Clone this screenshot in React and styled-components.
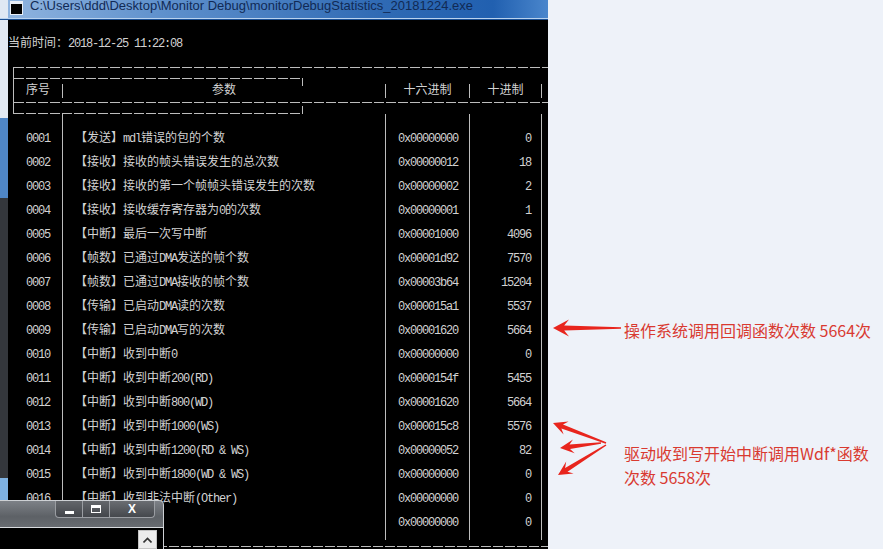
import React from 'react'
import styled, { createGlobalStyle } from 'styled-components'

const GlobalStyle = createGlobalStyle`
  html, body {
    margin: 0;
    padding: 0;
    background: #eef2f9;
  }
  body {
    width: 883px;
    height: 549px;
    overflow: hidden;
  }
`

const rows = [
  ['0001', '【发送】mdl错误的包的个数', '0x00000000', '0'],
  ['0002', '【接收】接收的帧头错误发生的总次数', '0x00000012', '18'],
  ['0003', '【接收】接收的第一个帧帧头错误发生的次数', '0x00000002', '2'],
  ['0004', '【接收】接收缓存寄存器为0的次数', '0x00000001', '1'],
  ['0005', '【中断】最后一次写中断', '0x00001000', '4096'],
  ['0006', '【帧数】已通过DMA发送的帧个数', '0x00001d92', '7570'],
  ['0007', '【帧数】已通过DMA接收的帧个数', '0x00003b64', '15204'],
  ['0008', '【传输】已启动DMA读的次数', '0x000015a1', '5537'],
  ['0009', '【传输】已启动DMA写的次数', '0x00001620', '5664'],
  ['0010', '【中断】收到中断0', '0x00000000', '0'],
  ['0011', '【中断】收到中断200(RD)', '0x0000154f', '5455'],
  ['0012', '【中断】收到中断800(WD)', '0x00001620', '5664'],
  ['0013', '【中断】收到中断1000(WS)', '0x000015c8', '5576'],
  ['0014', '【中断】收到中断1200(RD & WS)', '0x00000052', '82'],
  ['0015', '【中断】收到中断1800(WD & WS)', '0x00000000', '0'],
  ['0016', '【中断】收到非法中断(Other)', '0x00000000', '0'],
  ['0017', '【中断】', '0x00000000', '0'],
]

const Page = styled.div`
  position: relative;
  width: 883px;
  height: 549px;
  display: flex;
  background: #eef2f9;
  overflow: hidden;
`

const Window = styled.div`
  width: 548px;
  height: 549px;
  display: flex;
  flex-direction: column;
  flex-shrink: 0;
`

const TitleBar = styled.div`
  height: 18px;
  display: flex;
  align-items: flex-start;
  overflow: hidden;
  background: linear-gradient(to right, #dfe8f3 0, #dfe8f3 8px, #8fb4df 8px, #5e90cc 30%, #2f6ab4 70%, #2160b0 90%, #4a86cc 100%);
  border-bottom: 1px solid #b9d2ee;
  box-shadow: 0 1px 0 #1a4f93;
`

const AppIcon = styled.div`
  width: 11px;
  height: 10px;
  margin: 1px 7px 0 10px;
  flex-shrink: 0;
  background: #000;
  border: 1px solid #e8eef6;
  border-top-width: 3px;
`

const TitleText = styled.div`
  margin-top: -3px;
  font-family: "Liberation Sans", "Noto Sans", sans-serif;
  font-size: 13px;
  line-height: 18px;
  color: #112a55;
  white-space: nowrap;
`

const Main = styled.div`
  flex: 1;
  display: flex;
  min-height: 0;
  margin-top: 1px;
`

const LeftFrame = styled.div`
  width: 8px;
  flex-shrink: 0;
  background: linear-gradient(to bottom, #e2e9f3 0, #e2e9f3 98px, #4f86c6 98px, #4f86c6 178px, #34373c 178px, #34373c 458px, #7fb2e2 458px);
`

const Console = styled.div`
  flex: 1;
  display: flex;
  flex-direction: column;
  overflow: hidden;
  background: #000;
  color: #d2d2d2;
  font-family: "Liberation Mono", "Noto Sans CJK SC", monospace;
  font-size: 12px;
`

const Ascii = styled.span`
  letter-spacing: -1.2px;
`

const TimeLine = styled.div`
  margin-top: 16px;
  height: 16px;
  line-height: 16px;
  white-space: pre;
`

const Table = styled.div`
  margin-left: 5px;
  margin-top: 15px;
  display: flex;
  flex-direction: column;
`

const HeaderBlock = styled.div`
  border-left: 1px solid #bdbdbd;
  display: flex;
  flex-direction: column;
`

const Rule = styled.div`
  position: relative;
  height: 1px;
  width: ${p => p.$w ? `${p.$w}px` : '100%'};
  margin-top: ${p => p.$mt || 0}px;
  background: repeating-linear-gradient(to right, #bdbdbd 0, #bdbdbd 10px, transparent 10px, transparent 12px);
  &::after {
    content: '';
    display: ${p => p.$tick ? 'block' : 'none'};
    position: absolute;
    right: 0;
    width: 1px;
    height: 8px;
    background: #bdbdbd;
    ${p => p.$tick === 'down' ? 'top: 0;' : 'bottom: 0;'}
  }
`

const HeaderRow = styled.div`
  margin-top: 5px;
  height: 14px;
  display: grid;
  grid-template-columns: 48px 323px 84px 73px;
`

const HeaderCell = styled.div`
  line-height: 14px;
  text-align: center;
  border-left: ${p => p.$left ? '1px solid #bdbdbd' : 'none'};
  border-right: ${p => p.$right ? '1px solid #bdbdbd' : 'none'};
`

const BodyCols = styled.div`
  display: flex;
`

const Column = styled.div`
  box-sizing: border-box;
  width: ${p => p.$w}px;
  padding: 13px ${p => p.$pr || 0}px 5px ${p => p.$pl || 0}px;
  text-align: ${p => p.$align || 'left'};
  border-left: ${p => p.$left ? '1px solid #bdbdbd' : 'none'};
  border-right: ${p => p.$right ? '1px solid #bdbdbd' : 'none'};
  white-space: pre;
`

const Cell = styled.div`
  height: 24px;
  line-height: 24px;
`

const BottomRule = styled(Rule)`
  margin-top: 6px;
`

const Popup = styled.div`
  position: absolute;
  left: 0;
  top: 500px;
  width: 164px;
  height: 49px;
  display: flex;
  flex-direction: column;
`

const PopupBar = styled.div`
  box-sizing: border-box;
  height: 27px;
  display: flex;
  justify-content: flex-end;
  align-items: flex-start;
  padding-right: 8px;
  background: linear-gradient(to bottom, #7d8187, #5d6166 60%, #686c71);
  border-top: 1px solid #cdd0d4;
  border-right: 1px solid #cdd0d4;
  border-top-right-radius: 5px;
`

const CapButton = styled.div`
  box-sizing: border-box;
  width: ${p => p.$w}px;
  height: 17px;
  display: flex;
  align-items: center;
  justify-content: center;
  background: ${p => p.$close ? 'linear-gradient(#6a6d72, #45484d)' : 'linear-gradient(#63666b, #43464b)'};
  border: 1px solid #9a9da2;
  border-top: none;
  margin-left: -1px;
  color: #fff;
  font-family: "Liberation Sans", sans-serif;
  font-weight: bold;
  font-size: 12px;
  ${p => p.$first ? 'border-bottom-left-radius: 4px;' : ''}
  ${p => p.$close ? 'border-bottom-right-radius: 4px;' : ''}
`

const MinGlyph = styled.div`
  width: 9px;
  height: 3px;
  margin-top: 6px;
  background: #fff;
`

const MaxGlyph = styled.div`
  box-sizing: border-box;
  width: 10px;
  height: 8px;
  border: 1px solid #fff;
  border-top-width: 3px;
`

const PopupBody = styled.div`
  flex: 1;
  display: flex;
  justify-content: flex-end;
  align-items: flex-end;
  padding-right: 6px;
  background: #000;
  border-top: 1px solid #d9dcdf;
  border-right: 1px solid #cdd0d4;
`

const ScrollUp = styled.div`
  box-sizing: border-box;
  width: 19px;
  height: 19px;
  display: flex;
  align-items: center;
  justify-content: center;
  background: #ececec;
  border: 1px solid #c4c4c4;
`

const Notes = styled.div`
  flex: 1;
  display: flex;
  flex-direction: column;
  padding-left: 4px;
`

const Note = styled.div`
  display: flex;
  align-items: flex-start;
  margin-top: ${p => p.$top}px;
`

const NoteText = styled.div`
  margin-left: ${p => p.$ml || 0}px;
  margin-top: ${p => p.$mt || 0}px;
  font-family: "Noto Sans CJK SC", "Noto Sans", sans-serif;
  font-size: 16px;
  line-height: 24px;
  color: #d93a31;
  white-space: nowrap;
`

const Mixed = ({ text }) => (
  <>
    {text.match(/[\x00-\x7f]+|[^\x00-\x7f]+/g).map((run, i) =>
      /^[\x00-\x7f]+$/.test(run) ? <Ascii key={i}>{run}</Ascii> : <span key={i}>{run}</span>
    )}
  </>
)

const arrowPoints = (tx, ty, sx, sy, hl = 14, hw = 7, sw = 4.5, tw = 1.5) => {
  const len = Math.hypot(tx - sx, ty - sy)
  const dx = (tx - sx) / len
  const dy = (ty - sy) / len
  const nx = -dy
  const ny = dx
  const bx = tx - dx * hl
  const by = ty - dy * hl
  const cx = tx - dx * hl * 0.7
  const cy = ty - dy * hl * 0.7
  return [
    [tx, ty],
    [bx + nx * hw, by + ny * hw],
    [cx + nx * sw / 2, cy + ny * sw / 2],
    [sx + nx * tw / 2, sy + ny * tw / 2],
    [sx - nx * tw / 2, sy - ny * tw / 2],
    [cx - nx * sw / 2, cy - ny * sw / 2],
    [bx - nx * hw, by - ny * hw],
  ].map(p => p.map(v => v.toFixed(1)).join(',')).join(' ')
}

const Arrow = ({ tip, tail, hl, hw, sw }) => (
  <polygon points={arrowPoints(tip[0], tip[1], tail[0], tail[1], hl, hw, sw)} fill="#e8251d" />
)

const App = () => {
  return (
    <Page>
      <GlobalStyle />
      <Window>
        <TitleBar>
          <AppIcon />
          <TitleText>{'C:\\Users\\ddd\\Desktop\\Monitor Debug\\monitorDebugStatistics_20181224.exe'}</TitleText>
        </TitleBar>
        <Main>
          <LeftFrame />
          <Console>
            <TimeLine><Mixed text="当前时间：2018-12-25 11:22:08" /></TimeLine>
            <Table>
              <HeaderBlock>
                <Rule />
                <Rule $w={289} $mt={10} $tick="down" />
                <HeaderRow>
                  <HeaderCell>序号</HeaderCell>
                  <HeaderCell $left>参数</HeaderCell>
                  <HeaderCell $left>十六进制</HeaderCell>
                  <HeaderCell $left $right>十进制</HeaderCell>
                </HeaderRow>
                <Rule $mt={4} />
                <Rule $w={289} $mt={10} $tick="up" />
              </HeaderBlock>
              <BodyCols>
                <Column $w={49} $pl={13}>
                  {rows.map(r => <Cell key={r[0]}><Ascii>{r[0]}</Ascii></Cell>)}
                </Column>
                <Column $w={323} $pl={12} $left>
                  {rows.map(r => <Cell key={r[0]}><Mixed text={r[1]} /></Cell>)}
                </Column>
                <Column $w={84} $pl={12} $left>
                  {rows.map(r => <Cell key={r[0]}><Ascii>{r[2]}</Ascii></Cell>)}
                </Column>
                <Column $w={73} $pr={10} $align="right" $left $right>
                  {rows.map(r => <Cell key={r[0]}><Ascii>{r[3]}</Ascii></Cell>)}
                </Column>
              </BodyCols>
              <BottomRule />
            </Table>
          </Console>
        </Main>
      </Window>

      <Popup>
        <PopupBar>
          <CapButton $w={28} $first><MinGlyph /></CapButton>
          <CapButton $w={28}><MaxGlyph /></CapButton>
          <CapButton $w={46} $close>X</CapButton>
        </PopupBar>
        <PopupBody>
          <ScrollUp>
            <svg width="9" height="6" viewBox="0 0 9 6">
              <path d="M0.5 5.5 L4.5 1.5 L8.5 5.5" fill="none" stroke="#333" strokeWidth="1.6" />
            </svg>
          </ScrollUp>
        </PopupBody>
      </Popup>

      <Notes>
        <Note $top={318}>
          <svg width="70" height="24" viewBox="0 0 70 24">
            <Arrow tip={[1, 10]} tail={[69, 10]} hl={16} hw={8.5} sw={5} />
          </svg>
          <NoteText $ml={2}>操作系统调用回调函数次数 5664次</NoteText>
        </Note>
        <Note $top={74}>
          <svg width="62" height="68" viewBox="0 0 62 68">
            <Arrow tip={[1, 7]} tail={[54, 27]} />
            <Arrow tip={[8, 32]} tail={[49, 27]} />
            <Arrow tip={[6, 59]} tail={[54, 29]} />
          </svg>
          <NoteText $ml={10} $mt={25}>
            驱动收到写开始中断调用Wdf*函数<br />次数 5658次
          </NoteText>
        </Note>
      </Notes>
    </Page>
  )
}

export default App
